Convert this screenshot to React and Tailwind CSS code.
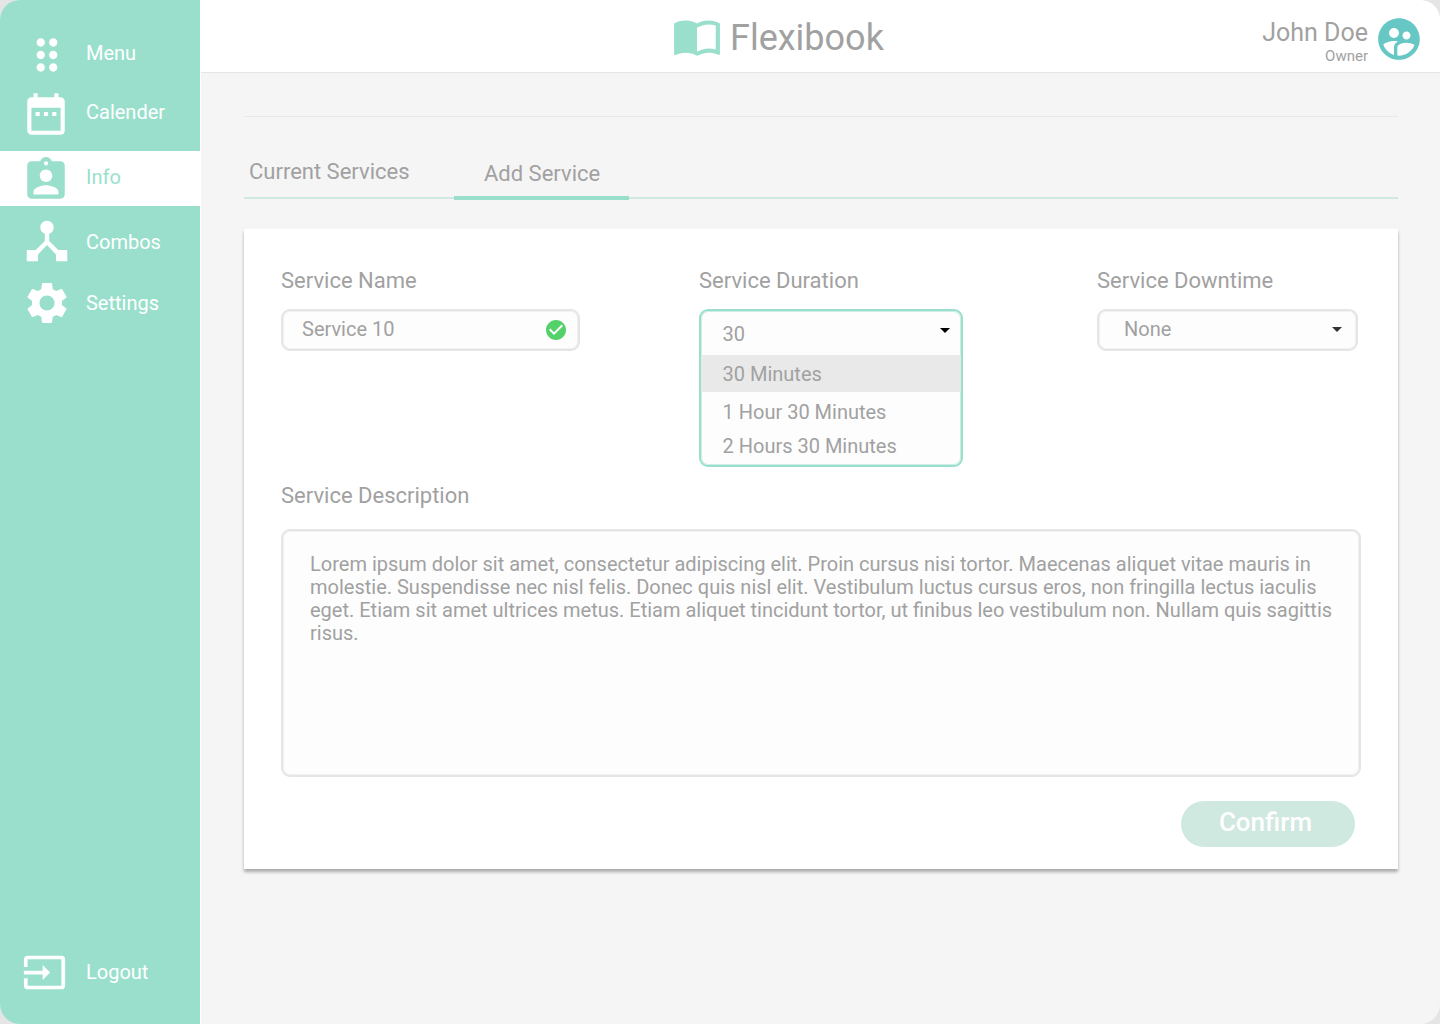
import {
  MdDragIndicator,
  MdDateRange,
  MdAssignmentInd,
  MdDeviceHub,
  MdSettings,
  MdInput,
  MdImportContacts,
  MdSupervisedUserCircle,
  MdArrowDropDown,
  MdCheckCircle,
} from "react-icons/md";

const navItems = [
  { label: "Menu", icon: MdDragIndicator, row: "h-[60px] pl-[22.4px]", iconBox: "mt-[5.6px] w-[63.6px]", size: 50, text: "mt-[17px]" },
  { label: "Calender", icon: MdDateRange, row: "h-[67px] pl-[20.8px]", iconBox: "mt-[4.8px] w-[65.2px]", size: 50, text: "mt-[16px]" },
  { label: "Info", icon: MdAssignmentInd, row: "h-[55px] pl-[20.8px] bg-white text-[#99dfcc]", iconBox: "mt-[4px] w-[65.2px]", size: 50, text: "mt-[14px]" },
  { label: "Combos", icon: MdDeviceHub, row: "h-[64px] pl-[20.3px]", iconBox: "mt-[8px] w-[65.7px]", size: 54, text: "mt-[24px]" },
  { label: "Settings", icon: MdSettings, row: "h-[64px] pl-[22.4px]", iconBox: "mt-[8px] w-[63.6px]", size: 50, text: "mt-[21px]" },
];

function NavItem({ label, icon: Icon, row, iconBox, size, text }) {
  return (
    <a className={`flex shrink-0 items-start ${row}`}>
      <span className={`shrink-0 ${iconBox}`}>
        <Icon size={size} />
      </span>
      <span className={`text-[20px] leading-6 ${text}`}>{label}</span>
    </a>
  );
}

function Sidebar() {
  return (
    <nav className="flex w-[200px] shrink-0 flex-col bg-[#99dfcc] pt-6 text-white">
      {navItems.map((item) => (
        <NavItem key={item.label} {...item} />
      ))}
      <div className="mt-auto">
        <NavItem label="Logout" icon={MdInput} row="h-[74px] pl-[22px]" iconBox="w-[64px]" size={45} text="mt-[10px]" />
      </div>
    </nav>
  );
}

function Header() {
  return (
    <header className="flex h-[73px] shrink-0 items-start border-b border-[#e5e5e5] bg-white">
      <div className="ml-[471px] flex items-start">
        <MdImportContacts size={50} className="mt-[10.5px] text-[#99dfcc]" />
        <h1 className="mt-[16px] ml-[8px] text-[36px] leading-[44px]">Flexibook</h1>
      </div>
      <div className="mt-[14px] mr-[16px] ml-auto flex items-start">
        <div className="mt-[4px] mr-[6px] text-right">
          <div className="text-[25px] leading-[30px]">John Doe</div>
          <div className="text-[15px] leading-[17px]">Owner</div>
        </div>
        <MdSupervisedUserCircle size={50} className="text-[#66c7c5]" />
      </div>
    </header>
  );
}

function Tabs() {
  return (
    <div className="mt-[38px] flex h-[45px] items-end">
      <div className="mb-px h-[40px] w-[210px] border-b-2 border-[#cfe8e0] pl-[5px] text-[22px] leading-[26px]">
        Current Services
      </div>
      <div className="h-[39px] w-[175px] border-b-4 border-[#99dfcc] pl-[30px] text-[22px] leading-[26px]">
        Add Service
      </div>
      <div className="mb-px h-[2px] flex-1 border-b-2 border-[#cfe8e0]" />
    </div>
  );
}

function Label({ children }) {
  return <div className="text-[22px] leading-[26px]">{children}</div>;
}

function Fields() {
  return (
    <div className="flex h-[215px] items-start">
      <div className="w-[418px]">
        <Label>Service Name</Label>
        <div className="mt-[15px] flex h-[42px] w-[299px] items-center justify-between rounded-[9px] border-2 border-[#e5e5e5] bg-[#fdfdfd] pr-[10px] pl-[19px] text-[20px] shadow-[inset_0_0_0_1px_#f1f1f1]">
          <span className="mb-[2px] leading-6">Service 10</span>
          <MdCheckCircle size={24} className="text-[#54d169]" />
        </div>
      </div>
      <div className="w-[398px]">
        <Label>Service Duration</Label>
        <div className="mt-[15px] h-[158px] w-[264px] overflow-hidden rounded-[9px] border-2 border-[#99dfcc] bg-[#fdfdfd] text-[20px] leading-6 shadow-[inset_0_0_0_1px_#cbeee5]">
          <div className="flex h-[44px] items-start justify-between pr-[4.5px] pl-[21.5px]">
            <span className="mt-[11px]">30</span>
            <MdArrowDropDown size={24} className="mt-[7px] text-black" />
          </div>
          <div className="h-[37px] bg-[#e9e9e9] pt-[7px] pl-[21.5px]">30 Minutes</div>
          <div className="pt-[8px] pl-[21.5px]">1 Hour 30 Minutes</div>
          <div className="pt-[10px] pl-[21.5px]">2 Hours 30 Minutes</div>
        </div>
      </div>
      <div>
        <Label>Service Downtime</Label>
        <div className="mt-[15px] flex h-[42px] w-[261px] items-center justify-between rounded-[9px] border-2 border-[#e5e5e5] bg-[#fdfdfd] pr-[7px] pl-[25px] text-[20px] shadow-[inset_0_0_0_1px_#f1f1f1]">
          <span className="mb-[2px] leading-6">None</span>
          <MdArrowDropDown size={24} className="mb-[3px] text-[#333]" />
        </div>
      </div>
    </div>
  );
}

function ServiceForm() {
  return (
    <section className="mt-[29px] flex h-[640px] flex-col bg-white pt-[39px] pr-[37px] pl-[37px] shadow-[0_3px_3px_rgba(0,0,0,0.3)]">
      <Fields />
      <Label>Service Description</Label>
      <div className="mt-[20px] h-[248px] w-[1080px] shrink-0 rounded-[9px] border-2 border-[#e5e5e5] bg-[#fdfdfd] pt-[22px] pl-[27px] text-[20px] leading-[23px] whitespace-nowrap shadow-[inset_0_0_0_1px_#f1f1f1]">
        Lorem ipsum dolor sit amet, consectetur adipiscing elit. Proin cursus nisi tortor. Maecenas aliquet vitae mauris in
        <br />
        molestie. Suspendisse nec nisl felis. Donec quis nisl elit. Vestibulum luctus cursus eros, non fringilla lectus iaculis
        <br />
        eget. Etiam sit amet ultrices metus. Etiam aliquet tincidunt tortor, ut finibus leo vestibulum non. Nullam quis sagittis
        <br />
        risus.
      </div>
      <button className="mt-[24px] mr-[6px] h-[46px] w-[174px] self-end rounded-full bg-[#cfe8e0] pr-[5px] pb-[5px] text-[26px] leading-[30px] font-medium text-white">
        Confirm
      </button>
    </section>
  );
}

export default function App() {
  return (
    <div className="h-[1024px] w-[1440px] bg-[#e5e5e5] font-['Roboto',sans-serif] text-[#a1a1a1]">
      <div className="flex h-full overflow-hidden rounded-[20px] bg-[#f5f5f5]">
        <Sidebar />
        <div className="flex flex-1 flex-col border-l border-white">
          <Header />
          <main className="flex flex-col pr-[42px] pl-[43px]">
            <div className="mt-[43px] border-t border-[#e8e8e8]" />
            <Tabs />
            <ServiceForm />
          </main>
        </div>
      </div>
    </div>
  );
}
